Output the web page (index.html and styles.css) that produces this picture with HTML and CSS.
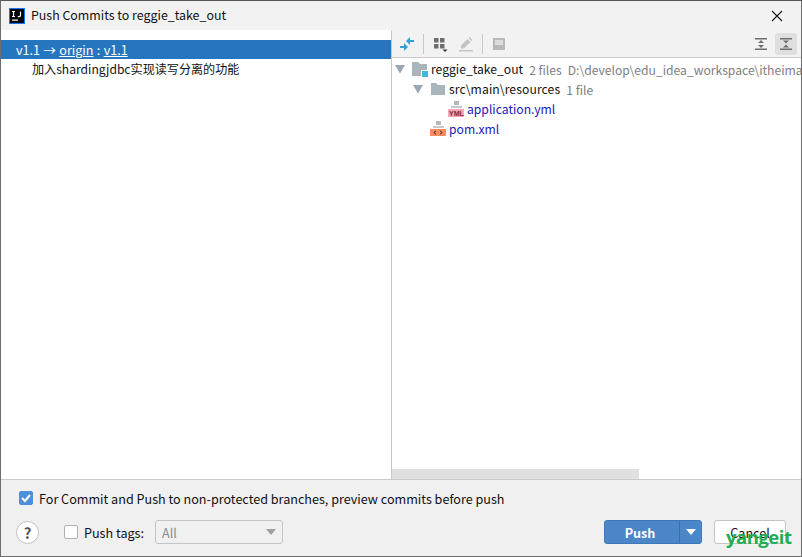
FILE: index.html
```html
<!DOCTYPE html>
<html lang="zh">
<head>
<meta charset="utf-8">
<title>Push Commits</title>
<link rel="stylesheet" href="styles.css">
</head>
<body>
<div class="dialog">
  <header class="titlebar">
    <svg class="app-icon" width="16" height="16" viewBox="0 0 16 16"><rect width="16" height="16" fill="#087cfa"/><rect x="1" y="1" width="14" height="14" fill="#000"/><rect x="3" y="11.5" width="6" height="1.2" fill="#fff"/><path d="M3 3.500h3M4.500 3.500v5M3 8.500h3M11.500 3.500v3.800q0 1.300-1.300 1.300H8.800" fill="none" stroke="#fff" stroke-width="1.200"/></svg>
    <span class="title">Push Commits to reggie_take_out</span>
    <svg class="close" width="12" height="12" viewBox="0 0 12 12"><path d="M1 1l10 10M11 1L1 11" stroke="#1a1a1a" stroke-width="1.100" fill="none"/></svg>
  </header>
  <main class="panes">
    <section class="left">
      <div class="sel-row">v1.1 → <u>origin</u> : <u>v1.1</u></div>
      <div class="commit-row">加入shardingjdbc实现读写分离的功能</div>
    </section>
    <section class="right">
      <div class="toolbar">
        <svg class="tool" width="16" height="16" viewBox="0 0 16 16"><path d="M7 5l4-4v3h4v2h-4v3zM9 11l-4-4v3H1v2h4v3z" fill="#389fd6"/></svg>
        <span class="sep"></span>
        <svg class="tool tool-wide" width="16" height="16" viewBox="0 0 16 16"><path d="M2 2h4.500v4.500H2zM8 2h4.500v4.500H8zM2 8h4.500v4.500H2zM8 8h4.500v4.500H8z" fill="#6e6e6e"/><path d="M10.500 13.500h5L13 16z" fill="#333"/></svg>
        <svg class="tool" width="16" height="16" viewBox="0 0 16 16"><path d="M1 14h14v1.500H1z" fill="#c4c4c4"/><path d="M3 12.500v-3l6.500-6.500 3 3-6.500 6.500z M10.500 2l1-1 3 3-1 1z" fill="#c4c4c4"/></svg>
        <span class="sep"></span>
        <svg class="tool" width="16" height="16" viewBox="0 0 16 16"><path d="M2 2h12v12H2z" fill="#b8b8b8"/><path d="M4 4h8v5H4z" fill="#dcdcdc"/></svg>
        <span class="spacer"></span>
        <svg class="tool tool-end" width="16" height="16" viewBox="0 0 16 16"><path d="M2 2h12v1.400H2zM2 12.600h12v1.400H2z" fill="#6e6e6e"/><path d="M8 4l3 3H5zM8 12L5 9h6z" fill="#6e6e6e"/></svg>
        <span class="tool-on"><svg width="16" height="16" viewBox="0 0 16 16"><path d="M2 2h12v1.400H2zM2 12.600h12v1.400H2z" fill="#6e6e6e"/><path d="M8 7.500l-3-3h6zM8 8.500l3 3H5z" fill="#6e6e6e"/></svg></span>
      </div>
      <div class="tree">
        <div class="node d0">
          <svg class="twisty" width="10" height="10" viewBox="0 0 10 10"><path d="M0 1h10L5 9.500z" fill="#9aa7b0"/></svg>
          <svg class="ficon" width="16" height="16" viewBox="0 0 16 16"><path d="M0 1h6l2 2h7v12H0z" fill="#a9b5bd"/><rect x="9" y="9" width="7" height="7" fill="#fff"/><rect x="10" y="10" width="6" height="6" fill="#40b6e0"/></svg>
          <span class="name">reggie_take_out</span><span class="meta">2 files</span><span class="meta path">D:\develop\edu_idea_workspace\itheima</span>
        </div>
        <div class="node d1">
          <svg class="twisty" width="10" height="10" viewBox="0 0 10 10"><path d="M0 1h10L5 9.500z" fill="#9aa7b0"/></svg>
          <svg class="ficon" width="16" height="16" viewBox="0 0 16 16"><path d="M1 2h5l2 2h7v10H1z" fill="#a9b5bd"/></svg>
          <span class="name">src\main\resources</span><span class="meta">1 file</span>
        </div>
        <div class="node d2">
          <svg class="ficon" width="16" height="16" viewBox="0 0 16 16"><path d="M6 0h5v4H6z" fill="#b8b8b8"/><path d="M3 5h11v2H3z" fill="#c8c8c8"/><rect y="8" width="16" height="8" fill="#f4a6b7"/></svg>
          <span class="yml">YML</span>
          <span class="name file">application.yml</span>
        </div>
        <div class="node d3">
          <svg class="ficon" width="16" height="16" viewBox="0 0 16 16"><path d="M6 0h5v4H6z" fill="#b8b8b8"/><path d="M3 5h11v2H3z" fill="#c8c8c8"/><rect y="8" width="16" height="7" fill="#f98b5e"/><path d="M6 9.800L3.800 11.500 6 13.200M10 9.800l2.200 1.700L10 13.200" fill="none" stroke="#333" stroke-width="1"/></svg>
          <span class="name file">pom.xml</span>
        </div>
      </div>
      <div class="hscroll"><span class="thumb"></span></div>
    </section>
  </main>
  <footer class="footer">
    <label class="check-row"><span class="box on"><svg width="14" height="14" viewBox="0 0 14 14"><path d="M3 7l3 3 5-6" fill="none" stroke="#fff" stroke-width="2"/></svg></span>For Commit and Push to non-protected branches, preview commits before push</label>
    <div class="actions">
      <span class="help">?</span>
      <label class="tags"><span class="box"></span>Push tags:</label>
      <span class="combo"><span>All</span><i class="arrow"></i></span>
      <span class="spacer"></span>
      <span class="push"><span class="push-main">Push</span><span class="push-drop"><i class="arrow white"></i></span></span>
      <span class="cancel">Cancel</span>
    </div>
  </footer>
  <div class="watermark">yangeit</div>
</div>
</body>
</html>
```
FILE: styles.css
```css
* { box-sizing: border-box; }
html, body { margin: 0; padding: 0; }
body {
  width: 802px;
  height: 557px;
  overflow: hidden;
  background: #f2f2f2;
  font-family: "Noto Sans CJK SC", "Noto Sans", sans-serif;
  font-size: 12.6px;
  color: #111;
}
.dialog {
  position: relative;
  width: 802px;
  height: 557px;
  border: 1px solid #6d6d6d;
  border-top-color: #555;
  display: flex;
  flex-direction: column;
  background: #f2f2f2;
  overflow: hidden;
}
.titlebar {
  height: 29px;
  flex: none;
  display: flex;
  align-items: center;
  padding: 0 18px 0 8px;
}
.app-icon { flex: none; }
.title { margin-left: 6px; font-size: 12.4px; line-height: 29px; }
.close { margin-left: auto; }
.panes { flex: 1; min-height: 0; display: flex; background: #fff; border-bottom: 1px solid #c9c9c9; }
.left { width: 391px; flex: none; border-right: 1px solid #c9c9c9; padding-top: 10px; }
.sel-row {
  height: 19px;
  line-height: 19px;
  background: #2675bf;
  color: #fff;
  padding-left: 15px;
  word-spacing: 0.5px;
}
.commit-row { height: 20px; line-height: 20px; padding-left: 31px; font-size: 12.1px; }
.right { flex: 1; min-width: 0; display: flex; flex-direction: column; position: relative; }
.toolbar {
  height: 28px;
  flex: none;
  display: flex;
  align-items: center;
  background: #f2f2f2;
  border-bottom: 1px solid #c9c9c9;
  padding: 0 4px 0 7px;
}
.tool { flex: none; margin-right: 8px; }
.tool-wide { margin-right: 10px; }
.sep { width: 1px; height: 20px; background: #c9c9c9; margin: 0 8px 0 0; }
.spacer { flex: 1; }
.tool-end { margin-right: 6px; }
.tool-on {
  width: 22px;
  height: 22px;
  background: #dfdfdf;
  border-radius: 3px;
  display: flex;
  align-items: center;
  justify-content: center;
}
.tree { flex: 1; min-height: 0; padding-top: 1px; overflow: hidden; }
.node { height: 20px; display: flex; align-items: center; white-space: nowrap; font-size: 12.15px; }
.d0 { padding-left: 3px; }
.d1 { padding-left: 21px; }
.d1 .name { letter-spacing: 0.1px; }
.d2 { padding-left: 56px; position: relative; }
.d3 { padding-left: 38px; }
.twisty { flex: none; margin-right: 7px; }
.ficon { flex: none; margin-right: 3px; }
.name { line-height: 20px; }
.file { color: #1a1ab8; }
.meta { color: #808080; margin-left: 6px; }
.yml {
  position: absolute;
  left: 57px;
  top: 11px;
  font-size: 7px;
  line-height: 8px;
  font-weight: 700;
  color: #7a2a3a;
  font-family: "Liberation Sans", sans-serif;
}
.hscroll { height: 10px; flex: none; background: #fff; }
.thumb { display: block; width: 247px; height: 10px; background: #e0e0e0; }
.footer { height: 76px; flex: none; padding: 8px 15px 0 15px; background: #f0f0f0; }
.check-row { display: flex; align-items: center; height: 20px; padding-left: 3px; }
.box {
  width: 14px;
  height: 14px;
  flex: none;
  margin-right: 6px;
  background: #fff;
  border: 1px solid #b0b0b0;
  border-radius: 2px;
}
.box.on { background: #4a90dc; border-color: #4a90dc; display: flex; align-items: center; justify-content: center; }
.box svg { flex: none; }
.actions { display: flex; align-items: center; height: 24px; margin-top: 12px; }
.help {
  width: 23px;
  height: 23px;
  border-radius: 50%;
  background: #fff;
  border: 1px solid #c0c0c0;
  display: flex;
  align-items: center;
  justify-content: center;
  font-weight: 700;
  font-size: 15px;
  color: #555;
  margin-right: 25px;
}
.tags { display: flex; align-items: center; margin-right: 11px; }
.tags .box { margin-right: 6px; }
.combo {
  width: 128px;
  height: 24px;
  border: 1px solid #c4c4c4;
  border-radius: 3px;
  background: #f0f0f0;
  color: #8c8c8c;
  display: flex;
  align-items: center;
  justify-content: space-between;
  padding: 0 6px;
}
.arrow { width: 0; height: 0; border-left: 5px solid transparent; border-right: 5px solid transparent; border-top: 6px solid #a0a0a0; }
.arrow.white { border-top-color: #fff; }
.push {
  width: 98px;
  height: 24px;
  display: flex;
  background: #4a86c8;
  border: 1px solid #3f78b8;
  border-radius: 3px;
  color: #fff;
  font-weight: 700;
  margin-right: 12px;
}
.push-main { flex: 1; display: flex; align-items: center; justify-content: center; padding-right: 4px; }
.push-drop { width: 22px; border-left: 1px solid #3a6ea8; display: flex; align-items: center; justify-content: center; }
.cancel {
  width: 72px;
  height: 24px;
  background: #fff;
  border: 1px solid #c4c4c4;
  border-radius: 3px;
  display: flex;
  align-items: center;
  justify-content: center;
}
.watermark {
  position: absolute;
  left: 725px;
  top: 521px;
  font-family: "Open Sans", sans-serif;
  font-size: 18.5px;
  font-weight: 700;
  line-height: 30px;
  letter-spacing: -0.5px;
  color: #1fae50;
}
```
